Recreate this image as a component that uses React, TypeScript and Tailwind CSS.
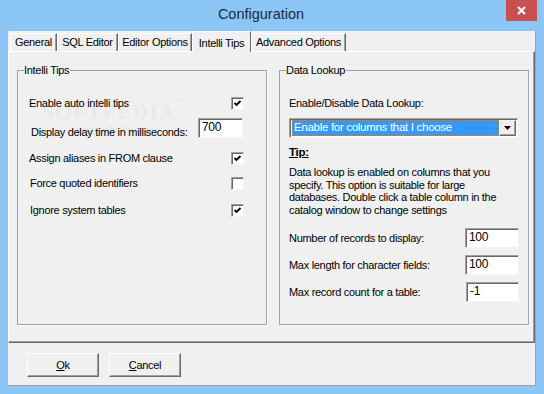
const sunken =
  "border border-t-[#a0a0a0] border-l-[#a0a0a0] border-r-[#f4f4f4] border-b-[#f4f4f4] shadow-[inset_1px_1px_0_#696969] bg-white";
const raised =
  "border border-t-white border-l-white border-r-[#696969] border-b-[#696969] shadow-[inset_-1px_-1px_0_#a0a0a0]";

function Check({ on }: { on: boolean }) {
  return (
    <span className={`flex h-[13px] w-[13px] items-center justify-center ${sunken}`}>
      {on && (
        <svg width="9" height="9" viewBox="0 0 9 9">
          <path d="M1.5 4 L3.5 6 L7.5 2" stroke="#000" strokeWidth="1.9" fill="none" />
        </svg>
      )}
    </span>
  );
}

function Field({ value, w = "w-[54px]" }: { value: string; w?: string }) {
  return (
    <div className={`h-[20px] ${w} ${sunken} pl-[3px] pt-[1px] leading-[15px] text-[12px]`}>
      {value}
    </div>
  );
}

function Group({ title, children }: { title: string; children: React.ReactNode }) {
  return (
    <div className="relative h-[255px] w-[250px] border border-[#a0a0a0] shadow-[1px_1px_0_#fff]">
      <span className="absolute -top-[8px] left-[6px] bg-[#f0f0f0] pr-[1px] leading-[14px]">{title}</span>
      {children}
    </div>
  );
}

const tabs = [
  { name: "General", w: "w-[47px]" },
  { name: "SQL Editor", w: "w-[61px]" },
  { name: "Editor Options", w: "w-[74px]" },
  { name: "Intelli Tips", w: "w-[59px]", on: true },
  { name: "Advanced Options", w: "w-[95px]" },
];

export default function App() {
  return (
    <div className="flex h-[394px] w-[544px] flex-col bg-[#8cc6f6] font-['Liberation_Sans',Arial,sans-serif] text-[11px] tracking-[-0.3px] text-black">
      <div className="relative flex h-[31px] items-center justify-center pr-[22px] pb-[1px] text-[14.5px] tracking-normal text-[#1b2b3d]">
        Configuration
        <div className="absolute right-[7px] top-0 flex h-[21px] w-[31px] items-center justify-center bg-[#c75050]">
          <svg width="9" height="9" viewBox="0 0 9 9">
            <path d="M1 1 L8 8 M8 1 L1 8" stroke="#fff" strokeWidth="2" />
          </svg>
        </div>
      </div>

      <div className="mx-[8px] flex h-[355px] flex-col border-r border-b border-[#a0a0a0] bg-[#f0f0f0]">
        <div className="flex h-[20px] items-end pl-[2px]">
          {tabs.map((t) =>
            t.on ? (
              <div
                key={t.name}
                className={`relative z-10 -mb-[1px] flex h-[21px] ${t.w} items-start justify-center border-t border-l border-r border-t-white border-l-white border-r-[#696969] bg-[#f0f0f0] pt-[3px]`}
              >
                {t.name}
              </div>
            ) : (
              <div
                key={t.name}
                className={`flex h-[18px] ${t.w} items-center justify-center border-t border-l border-r border-t-white border-l-white border-r-[#696969] shadow-[inset_-1px_0_0_#a0a0a0]`}
              >
                {t.name}
              </div>
            )
          )}
        </div>

        <div className={`flex h-[292px] gap-[12px] pt-[18px] pl-[8px] ${raised}`}>
          <Group title="Intelli Tips">
            <div className="pointer-events-none absolute left-[24px] top-[26px] select-none font-['Liberation_Serif',serif] text-[21px] font-bold tracking-[1.5px] text-[#e9e9e9]">
              SOFTPEDIA<span className="align-top text-[7px]">™</span>
            </div>
            <div className="pointer-events-none absolute left-[58px] top-[53px] text-[9px] tracking-normal text-[#e2e2e2]">
              www.softpedia.com
            </div>
            <div className="relative flex flex-col pt-[23px] pl-[11px] pr-[22px]">
              <div className="flex h-[18px] items-center justify-between">
                <span>Enable auto intelli tips</span>
                <Check on />
              </div>
              <div className="mt-[6px] flex h-[21px] items-end justify-between pl-[2px] pr-[1px]">
                <span className="leading-[14px]">Display delay time in milliseconds:</span>
                <div className="mb-[1px]">
                  <Field value="700" w="w-[45px]" />
                </div>
              </div>
              <div className="mt-[10px] flex h-[18px] items-center justify-between">
                <span>Assign aliases in FROM clause</span>
                <Check on />
              </div>
              <div className="mt-[7px] flex h-[18px] items-center justify-between pl-[1px]">
                <span>Force quoted identifiers</span>
                <Check on={false} />
              </div>
              <div className="mt-[9px] flex h-[18px] items-center justify-between pl-[1px]">
                <span>Ignore system tables</span>
                <Check on />
              </div>
            </div>
          </Group>

          <Group title="Data Lookup">
            <div className="flex flex-col pt-[23px] pl-[9px] pr-[9px]">
              <div className="flex h-[18px] items-center">Enable/Disable Data Lookup:</div>
              <div className={`mt-[6px] mr-[1px] flex h-[20px] items-center pl-[2px] pr-[1px] ${sunken}`}>
                <div className="flex h-[16px] flex-1 items-center border border-dotted border-[#c08040] bg-[#3399ff] pl-[1px] text-[11.5px] text-white">
                  Enable for columns that I choose
                </div>
                <div className={`flex h-[16px] w-[17px] items-center justify-center bg-[#f0f0f0] ${raised}`}>
                  <svg width="7" height="4" viewBox="0 0 7 4">
                    <path d="M0 0 H7 L3.5 4 Z" fill="#000" />
                  </svg>
                </div>
              </div>
              <div className="mt-[8px] flex h-[14px] items-center text-[11.5px] font-bold underline">Tip:</div>
              <p className="mt-[6px] leading-[12.5px]">
                Data lookup is enabled on columns that you
                <br />
                specify. This option is suitable for large
                <br />
                databases. Double click a table column in the
                <br />
                catalog window to change settings
              </p>
              <div className="mt-[12px] flex h-[20px] items-center justify-between">
                <span>Number of records to display:</span>
                <Field value="100" />
              </div>
              <div className="mt-[7px] flex h-[20px] items-center justify-between">
                <span>Max length for character fields:</span>
                <Field value="100" />
              </div>
              <div className="mt-[7px] flex h-[20px] items-center justify-between">
                <span>Max record count for a table:</span>
                <Field value="-1" w="w-[53px]" />
              </div>
            </div>
          </Group>
        </div>

        <div className="flex gap-[10px] pt-[10px] pl-[19px]">
          <div className={`flex h-[24px] w-[72px] items-center justify-center ${raised}`}>
            <span>
              <span className="underline">O</span>k
            </span>
          </div>
          <div className={`flex h-[24px] w-[72px] items-center justify-center ${raised}`}>
            <span>
              <span className="underline">C</span>ancel
            </span>
          </div>
        </div>
      </div>
    </div>
  );
}
